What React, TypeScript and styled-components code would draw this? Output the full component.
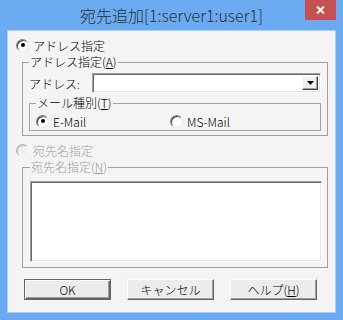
import React from "react";
import styled, { createGlobalStyle } from "styled-components";

const GlobalStyle = createGlobalStyle`
    html, body {
        margin: 0;
        padding: 0;
    }
    body {
        width: 343px;
        height: 320px;
        overflow: hidden;
        font-family: "Noto Sans CJK JP", "Liberation Sans", sans-serif;
        font-size: 12px;
        font-weight: 300;
    }
`;

const Window = styled.div`
    width: 343px;
    height: 320px;
    box-sizing: border-box;
    background-color: #6aabf2;
    display: flex;
    flex-direction: column;
`;

const TitleBar = styled.div`
    height: 30px;
    display: grid;
    grid-template-columns: 1fr auto 1fr;
    align-items: start;
`;

const Title = styled.div`
    grid-column: 2;
    line-height: 30px;
    font-size: 16px;
    font-weight: 300;
    color: #2e2e2e;
    white-space: nowrap;
`;

const CloseButton = styled.div`
    grid-column: 3;
    justify-self: end;
    margin-right: 7px;
    width: 31px;
    height: 20px;
    background-color: #c75050;
    display: flex;
    align-items: center;
    justify-content: center;
`;

const Client = styled.div`
    flex: 1;
    margin: 0 7px 7px;
    border: 1px solid #a9cdf5;
    background: repeating-conic-gradient(#f0f0f0 0 25%, #f8f8f8 0 50%) 0 0 / 2px 2px;
    padding-top: 6px;
    display: flex;
    flex-direction: column;
`;

const RadioRow = styled.label<{ $disabled?: boolean; $indent?: number; $top?: number }>`
    display: flex;
    align-items: center;
    gap: 4px;
    height: 16px;
    margin-left: ${p => p.$indent ?? 8}px;
    margin-top: ${p => p.$top ?? 0}px;
    color: ${p => (p.$disabled ? "#a0a0a0" : "#000")};
    white-space: nowrap;
`;

const RadioCircle = styled.span<{ $checked?: boolean; $disabled?: boolean }>`
    width: 13px;
    height: 13px;
    box-sizing: border-box;
    border-radius: 50%;
    border: 1px solid;
    border-color: ${p => (p.$disabled ? "#b0b0b0 #f4f4f4 #f4f4f4 #b0b0b0" : "#808080 #e8e8e8 #e8e8e8 #808080")};
    background-color: ${p => (p.$disabled ? "#f0f0f0" : "#fff")};
    box-shadow: inset 1px 1px 0 ${p => (p.$disabled ? "#c8c8c8" : "#404040")};
    display: flex;
    align-items: center;
    justify-content: center;

    &::after {
        content: "";
        width: 4px;
        height: 4px;
        border-radius: 50%;
        background-color: #000;
        display: ${p => (p.$checked ? "block" : "none")};
    }
`;

const Group = styled.fieldset<{ $pad?: string; $margin?: string }>`
    margin: ${p => p.$margin ?? "2px 7px 0 14px"};
    padding: ${p => p.$pad ?? "4px 6px 4px 6px"};
    border: 1px solid #a0a0a0;
    min-width: 0;
`;

const Legend = styled.legend<{ $disabled?: boolean }>`
    padding: 0 1px;
    line-height: 14px;
    font-size: 12px;
    color: ${p => (p.$disabled ? "#9a9a9a" : "#000")};
`;

const ComboRow = styled.div`
    display: flex;
    align-items: center;
    height: 20px;
`;

const FieldLabel = styled.span`
    width: 63px;
    flex: none;
    white-space: nowrap;
`;

const Combo = styled.div`
    flex: 1;
    height: 20px;
    box-sizing: border-box;
    background-color: #fff;
    border: 1px solid;
    border-color: #a0a0a0 #fff #fff #a0a0a0;
    box-shadow: inset 1px 1px 0 #696969, inset -1px -1px 0 #e3e3e3;
    display: flex;
    justify-content: flex-end;
    padding: 2px;
`;

const DropButton = styled.div`
    width: 16px;
    box-sizing: border-box;
    background-color: #f0f0f0;
    border: 1px solid;
    border-color: #fff #404040 #404040 #fff;
    box-shadow: inset -1px -1px 0 #a0a0a0;
    display: flex;
    align-items: center;
    justify-content: center;
`;

const RadioGrid = styled.div`
    display: grid;
    grid-template-columns: 134px 1fr;
`;

const ListBox = styled.div`
    height: 81px;
    box-sizing: border-box;
    background-color: #fff;
    border: 1px solid;
    border-color: #a0a0a0 #fff #fff #a0a0a0;
    box-shadow: inset 1px 1px 0 #696969, inset -1px -1px 0 #e3e3e3;
`;

const ButtonRow = styled.div`
    display: flex;
    gap: 16px;
    margin: 11px 0 0 16px;
`;

const Button = styled.div<{ $default?: boolean }>`
    width: 87px;
    height: 21px;
    box-sizing: border-box;
    background-color: #ececec;
    border: 1px solid;
    border-color: ${p => (p.$default ? "#646464" : "#fff #646464 #646464 #fff")};
    box-shadow: ${p =>
        p.$default
            ? "inset 1px 1px 0 #fff, inset -1px -1px 0 #646464, inset -2px -2px 0 #a0a0a0"
            : "inset -1px -1px 0 #a0a0a0"};
    display: flex;
    align-items: center;
    justify-content: center;
    color: #000;
    white-space: nowrap;
`;

export default function App() {
    return (
        <>
            <GlobalStyle />
            <Window>
                <TitleBar>
                    <Title>宛先追加[1:server1:user1]</Title>
                    <CloseButton>
                        <svg width="9" height="8" viewBox="0 0 9 8">
                            <path d="M1 0.5 L8 7.5 M8 0.5 L1 7.5" stroke="#fff" strokeWidth="2" />
                        </svg>
                    </CloseButton>
                </TitleBar>
                <Client>
                    <RadioRow>
                        <RadioCircle $checked />
                        アドレス指定
                    </RadioRow>
                    <Group>
                        <Legend>アドレス指定(<u>A</u>)</Legend>
                        <ComboRow>
                            <FieldLabel>アドレス:</FieldLabel>
                            <Combo>
                                <DropButton>
                                    <svg width="7" height="4" viewBox="0 0 7 4">
                                        <path d="M0 0 H7 L3.5 4 Z" fill="#000" />
                                    </svg>
                                </DropButton>
                            </Combo>
                        </ComboRow>
                        <Group $margin="3px 0 0 0" $pad="3px 6px 1px 6px">
                            <Legend>メール種別(<u>T</u>)</Legend>
                            <RadioGrid>
                                <RadioRow $indent={0}>
                                    <RadioCircle $checked />
                                    E-Mail
                                </RadioRow>
                                <RadioRow $indent={0}>
                                    <RadioCircle />
                                    MS-Mail
                                </RadioRow>
                            </RadioGrid>
                        </Group>
                    </Group>
                    <RadioRow $disabled $top={6}>
                        <RadioCircle $disabled />
                        宛先名指定
                    </RadioRow>
                    <Group $pad="7px 5px 5px 7px">
                        <Legend $disabled>宛先名指定(<u>N</u>)</Legend>
                        <ListBox />
                    </Group>
                    <ButtonRow>
                        <Button $default>OK</Button>
                        <Button>キャンセル</Button>
                        <Button>ヘルプ(<u>H</u>)</Button>
                    </ButtonRow>
                </Client>
            </Window>
        </>
    );
}
